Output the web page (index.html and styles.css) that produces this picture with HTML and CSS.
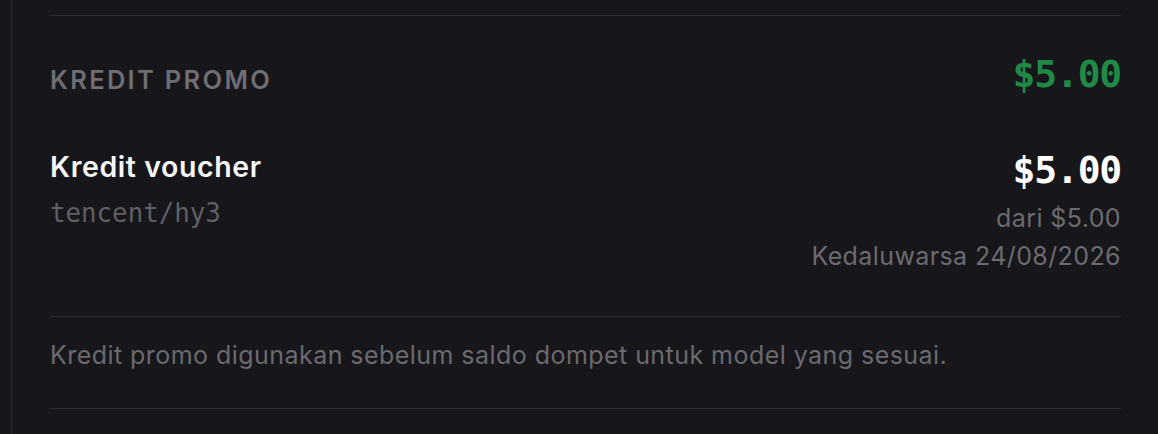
FILE: index.html
```html
<!DOCTYPE html>
<html lang="id">
<head>
<meta charset="utf-8">
<link rel="stylesheet" href="styles.css">
</head>
<body>
<div class="panel">
  <div class="prev"></div>
  <section class="promo">
    <div class="promo-head">
      <h2 class="promo-title">KREDIT PROMO</h2>
      <div class="promo-total">$5.00</div>
    </div>
    <div class="voucher">
      <div class="voucher-info">
        <div class="voucher-name">Kredit voucher</div>
        <div class="voucher-model">tencent/hy3</div>
      </div>
      <div class="voucher-amounts">
        <div class="voucher-amount">$5.00</div>
        <div class="voucher-meta first">dari $5.00</div>
        <div class="voucher-meta">Kedaluwarsa 24/08/2026</div>
      </div>
    </div>
    <p class="promo-note">Kredit promo digunakan sebelum saldo dompet untuk model yang sesuai.</p>
  </section>
</div>
</body>
</html>
```
FILE: styles.css
```css
html, body {
  margin: 0;
  padding: 0;
  background: #17161b;
}
body {
  font-family: Inter, "Noto Sans", sans-serif;
  color: #f4f4f5;
  height: 434px;
  overflow: hidden;
}
.panel {
  margin-left: 11px;
  border-left: 1px solid #2b2b30;
  padding: 0 37px 0 38px;
  height: 434px;
}
.prev {
  height: 15px;
  border-bottom: 1px solid #2e2d33;
}
.promo {
  border-bottom: 1px solid #2e2d33;
}
.promo-head {
  display: flex;
  justify-content: space-between;
  align-items: flex-start;
  margin-top: 38px;
}
.promo-title {
  margin: 0;
  font-size: 25.5px;
  line-height: 52px;
  font-weight: 600;
  letter-spacing: 2.3px;
  color: #6e6e73;
}
.promo-total {
  font-family: "DejaVu Sans Mono", "Liberation Mono", monospace;
  font-size: 38px;
  line-height: 40px;
  letter-spacing: -1.2px;
  font-weight: 700;
  color: #1f8a45;
}
.voucher {
  display: flex;
  justify-content: space-between;
  align-items: flex-start;
  margin-top: 43px;
  padding-bottom: 41px;
  border-bottom: 1px solid #2e2d33;
}
.voucher-name {
  font-size: 28.5px;
  line-height: 36px;
  letter-spacing: 0.6px;
  font-weight: 600;
  color: #f6f6f7;
}
.voucher-model {
  margin-top: 12px;
  font-family: "DejaVu Sans Mono", "Liberation Mono", monospace;
  font-size: 25.8px;
  line-height: 32px;
  color: #5f5f64;
}
.voucher-amounts {
  display: flex;
  flex-direction: column;
  align-items: flex-end;
}
.voucher-amount {
  margin-top: 1px;
  font-family: "DejaVu Sans Mono", "Liberation Mono", monospace;
  font-size: 38px;
  line-height: 40px;
  letter-spacing: -1.2px;
  font-weight: 700;
  color: #ffffff;
}
.voucher-meta {
  font-size: 25px;
  line-height: 38px;
  letter-spacing: 0.4px;
  color: #6b6b70;
}
.voucher-meta.first {
  margin-top: 9px;
}
.promo-note {
  margin: 0;
  padding: 19px 0 34px;
  font-size: 25px;
  line-height: 38px;
  letter-spacing: 0.45px;
  color: #6a6a6f;
}
```
